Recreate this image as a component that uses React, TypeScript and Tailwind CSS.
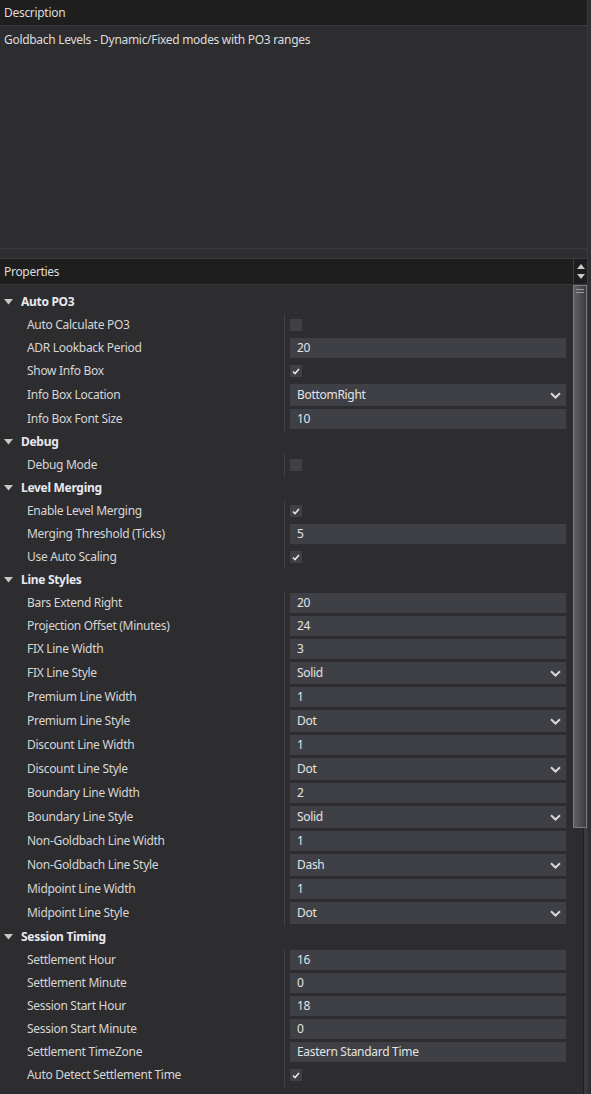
import React from "react";

type Prop =
  | { label: string; kind: "text"; value: string }
  | { label: string; kind: "dd"; value: string }
  | { label: string; kind: "cb"; value: boolean };

const groups: { title: string; props: Prop[] }[] = [
  {
    title: "Auto PO3",
    props: [
      { label: "Auto Calculate PO3", kind: "cb", value: false },
      { label: "ADR Lookback Period", kind: "text", value: "20" },
      { label: "Show Info Box", kind: "cb", value: true },
      { label: "Info Box Location", kind: "dd", value: "BottomRight" },
      { label: "Info Box Font Size", kind: "text", value: "10" },
    ],
  },
  {
    title: "Debug",
    props: [{ label: "Debug Mode", kind: "cb", value: false }],
  },
  {
    title: "Level Merging",
    props: [
      { label: "Enable Level Merging", kind: "cb", value: true },
      { label: "Merging Threshold (Ticks)", kind: "text", value: "5" },
      { label: "Use Auto Scaling", kind: "cb", value: true },
    ],
  },
  {
    title: "Line Styles",
    props: [
      { label: "Bars Extend Right", kind: "text", value: "20" },
      { label: "Projection Offset (Minutes)", kind: "text", value: "24" },
      { label: "FIX Line Width", kind: "text", value: "3" },
      { label: "FIX Line Style", kind: "dd", value: "Solid" },
      { label: "Premium Line Width", kind: "text", value: "1" },
      { label: "Premium Line Style", kind: "dd", value: "Dot" },
      { label: "Discount Line Width", kind: "text", value: "1" },
      { label: "Discount Line Style", kind: "dd", value: "Dot" },
      { label: "Boundary Line Width", kind: "text", value: "2" },
      { label: "Boundary Line Style", kind: "dd", value: "Solid" },
      { label: "Non-Goldbach Line Width", kind: "text", value: "1" },
      { label: "Non-Goldbach Line Style", kind: "dd", value: "Dash" },
      { label: "Midpoint Line Width", kind: "text", value: "1" },
      { label: "Midpoint Line Style", kind: "dd", value: "Dot" },
    ],
  },
  {
    title: "Session Timing",
    props: [
      { label: "Settlement Hour", kind: "text", value: "16" },
      { label: "Settlement Minute", kind: "text", value: "0" },
      { label: "Session Start Hour", kind: "text", value: "18" },
      { label: "Session Start Minute", kind: "text", value: "0" },
      { label: "Settlement TimeZone", kind: "text", value: "Eastern Standard Time" },
      { label: "Auto Detect Settlement Time", kind: "cb", value: true },
    ],
  },
];

function Check() {
  return (
    <svg width="8" height="7" viewBox="0 0 8 7">
      <path d="M1 3.5 L3 5.5 L7 1" stroke="#e8e8e8" strokeWidth="1.6" fill="none" />
    </svg>
  );
}

function Chevron() {
  return (
    <svg width="11" height="7" viewBox="0 0 11 7">
      <path d="M1 1.2 L5.5 5.5 L10 1.2" stroke="#d8d8d8" strokeWidth="2" fill="none" />
    </svg>
  );
}

function Value({ p }: { p: Prop }) {
  if (p.kind === "cb") {
    return (
      <div className="flex h-full items-center pl-[5px]">
        <div className="flex h-[12px] w-[12px] items-center justify-center bg-[#3f3f46]">
          {p.value ? <Check /> : null}
        </div>
      </div>
    );
  }
  if (p.kind === "dd") {
    return (
      <div className="flex h-full items-center pl-[5px] pr-[7px]">
        <div className="flex h-[22px] flex-1 items-center justify-between bg-[#3f3f46] pl-[7px] pr-[5px] text-[#e4e4e4]">
          <span>{p.value}</span>
          <Chevron />
        </div>
      </div>
    );
  }
  return (
    <div className="flex h-full items-center pl-[5px] pr-[7px]">
      <div className="flex h-[20px] flex-1 items-center bg-[#3f3f46] pl-[7px] text-[#e4e4e4]">
        {p.value}
      </div>
    </div>
  );
}

export default function App() {
  return (
    <div
      className="flex h-[1094px] w-[591px] overflow-hidden bg-[#2d2d30] text-[12px] leading-[16px] tracking-[-0.3px] text-[#dcdcdc]"
      style={{ fontFamily: '"Noto Sans", "Open Sans", sans-serif' }}
    >
      <div className="flex w-[587px] flex-col">
        {/* Description */}
        <div className="flex h-[26px] shrink-0 items-center border-b border-[#3a3a3e] bg-[#1e1e1e] pl-[4px]">
          Description
        </div>
        <div className="h-[223px] shrink-0 border-b border-[#3a3a3e] bg-[#2d2d30] pl-[4px] pt-[6px]">
          Goldbach Levels - Dynamic/Fixed modes with PO3 ranges
        </div>
        <div className="h-[10px] shrink-0 border-b border-[#3a3a3e] bg-[#2f2f33]" />

        {/* Properties */}
        <div className="flex min-h-0 flex-1 overflow-hidden">
          <div className="flex flex-1 flex-col">
            <div className="flex h-[26px] shrink-0 items-center border-b border-[#3a3a3e] bg-[#1e1e1e] pl-[4px]">
              Properties
            </div>
            <div className="shrink-0 pt-[5.5px]">
              {groups.map((g) => (
                <div key={g.title}>
                  <div className="flex h-[23px] items-center">
                    <div className="flex w-[21px] justify-start pl-[4px]">
                      <svg width="9" height="6" viewBox="0 0 9 6">
                        <path d="M0 0 H9 L4.5 5.5 Z" fill="#c8c8c8" />
                      </svg>
                    </div>
                    <span className="font-bold text-[#e8e8ee]">{g.title}</span>
                  </div>
                  {g.props.map((p) => (
                    <div
                      key={p.label}
                      className={`flex ${p.kind === "dd" ? "h-[25px]" : "h-[23px]"}`}
                    >
                      <div className="flex w-[284px] items-center pl-[27px] text-[#d6d6d6]">
                        {p.label}
                      </div>
                      <div className="flex-1 border-l border-[#404045]">
                        <Value p={p} />
                      </div>
                    </div>
                  ))}
                </div>
              ))}
            </div>
          </div>

          {/* Scrollbar */}
          <div className="flex w-[14px] shrink-0 flex-col">
            <div className="flex h-[26px] shrink-0 flex-col items-center justify-center gap-[5px] border-b border-l border-[#3a3a3e] bg-[#1e1e1e]">
              <svg width="8" height="5" viewBox="0 0 8 5">
                <path d="M0 5 H8 L4 0 Z" fill="#c8c8c8" />
              </svg>
              <svg width="8" height="5" viewBox="0 0 8 5">
                <path d="M0 0 H8 L4 5 Z" fill="#c8c8c8" />
              </svg>
            </div>
            <div className="flex flex-1 flex-col bg-[#2d2d30]">
              <div className="flex h-[543px] shrink-0 flex-col items-center border border-[#7a7a7e] bg-gradient-to-r from-[#626266] to-[#3c3c40] pt-[3px]">
                <div className="h-px w-[8px] bg-[#9a9a9e]" />
                <div className="mt-[2px] h-px w-[8px] bg-[#9a9a9e]" />
              </div>
              <div className="flex flex-1 justify-end">
                <div className="w-[4px] border-l border-[#1f1f22] bg-[#3a3a3e]" />
              </div>
            </div>
          </div>
        </div>
      </div>
      <div className="w-[4px] shrink-0 border-l border-[#3a3a3e] bg-[#2f2f33]" />
    </div>
  );
}
